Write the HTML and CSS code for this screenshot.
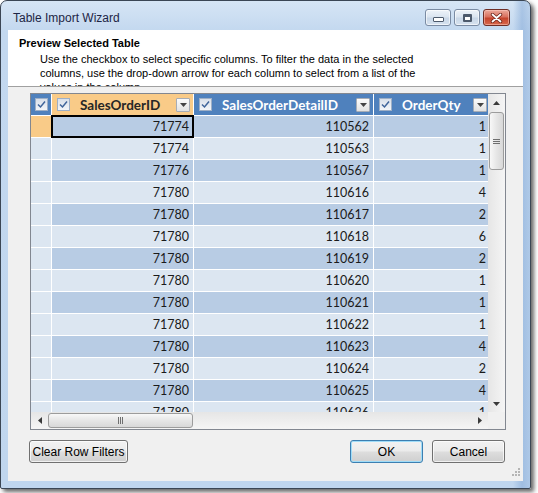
FILE: index.html
```html
<!DOCTYPE html>
<html>
<head>
<meta charset="utf-8">
<title>Table Import Wizard</title>
<link rel="stylesheet" href="styles.css">
</head>
<body>
<div class="window">
  <div class="titlebar">
    <span class="title">Table Import Wizard</span>
    <div class="caption">
      <span class="cbtn"><span class="min-ico"></span></span>
      <span class="cbtn"><span class="max-ico"></span></span>
      <span class="cbtn close"><svg width="13" height="10" viewBox="0 0 13 10"><path d="M2.5 1.5 L10.5 8.5 M10.5 1.5 L2.5 8.5" stroke="#6b2419" stroke-width="3.4" stroke-linecap="round"/><path d="M2.5 1.5 L10.5 8.5 M10.5 1.5 L2.5 8.5" stroke="#fff" stroke-width="1.8" stroke-linecap="round"/></svg></span>
    </div>
  </div>
  <div class="client">
    <div class="header">
      <div class="h-title">Preview Selected Table</div>
      <p class="h-desc">Use the checkbox to select specific columns. To filter the data in the selected<br>columns, use the drop-down arrow for each column to select from a list of the<br>values in the column.</p>
    </div>
    <div class="content">
      <div class="grid">
        <div class="cells">
          <div class="hc corner-hc"><span class="cb"><svg width="9" height="9" viewBox="0 0 9 9"><path d="M1 4.5 L3.5 7 L8 1.5" fill="none" stroke="#3f649a" stroke-width="1.5"/></svg></span></div>
          <div class="hc sel"><span class="cb"><svg width="9" height="9" viewBox="0 0 9 9"><path d="M1 4.5 L3.5 7 L8 1.5" fill="none" stroke="#3f649a" stroke-width="1.5"/></svg></span><span class="name">SalesOrderID</span><span class="dd"><svg width="7" height="4" viewBox="0 0 7 4"><path d="M0 0 H7 L3.5 4 Z" fill="#444"/></svg></span></div>
          <div class="hc"><span class="cb"><svg width="9" height="9" viewBox="0 0 9 9"><path d="M1 4.5 L3.5 7 L8 1.5" fill="none" stroke="#3f649a" stroke-width="1.5"/></svg></span><span class="name">SalesOrderDetailID</span><span class="dd"><svg width="7" height="4" viewBox="0 0 7 4"><path d="M0 0 H7 L3.5 4 Z" fill="#444"/></svg></span></div>
          <div class="hc"><span class="cb"><svg width="9" height="9" viewBox="0 0 9 9"><path d="M1 4.5 L3.5 7 L8 1.5" fill="none" stroke="#3f649a" stroke-width="1.5"/></svg></span><span class="name">OrderQty</span><span class="dd"><svg width="7" height="4" viewBox="0 0 7 4"><path d="M0 0 H7 L3.5 4 Z" fill="#444"/></svg></span></div>

          <div class="rh sel"></div><div class="c cur">71774</div><div class="c">110562</div><div class="c">1</div>
          <div class="rh"></div><div class="c l">71774</div><div class="c l">110563</div><div class="c l">1</div>
          <div class="rh"></div><div class="c">71776</div><div class="c">110567</div><div class="c">1</div>
          <div class="rh"></div><div class="c l">71780</div><div class="c l">110616</div><div class="c l">4</div>
          <div class="rh"></div><div class="c">71780</div><div class="c">110617</div><div class="c">2</div>
          <div class="rh"></div><div class="c l">71780</div><div class="c l">110618</div><div class="c l">6</div>
          <div class="rh"></div><div class="c">71780</div><div class="c">110619</div><div class="c">2</div>
          <div class="rh"></div><div class="c l">71780</div><div class="c l">110620</div><div class="c l">1</div>
          <div class="rh"></div><div class="c">71780</div><div class="c">110621</div><div class="c">1</div>
          <div class="rh"></div><div class="c l">71780</div><div class="c l">110622</div><div class="c l">1</div>
          <div class="rh"></div><div class="c">71780</div><div class="c">110623</div><div class="c">4</div>
          <div class="rh"></div><div class="c l">71780</div><div class="c l">110624</div><div class="c l">2</div>
          <div class="rh"></div><div class="c">71780</div><div class="c">110625</div><div class="c">4</div>
          <div class="rh"></div><div class="c l">71780</div><div class="c l">110626</div><div class="c l">1</div>
        </div>
        <div class="vscroll">
          <span class="arrow"><svg width="7" height="4" viewBox="0 0 7 4"><path d="M0 4 H7 L3.5 0 Z" fill="#3a3a3a"/></svg></span>
          <span class="vthumb"><svg width="7" height="7" viewBox="0 0 7 7"><path d="M0 1.5 H7 M0 3.5 H7 M0 5.5 H7" stroke="#6f6f6f" stroke-width="1"/></svg></span>
          <span class="fill"></span>
          <span class="arrow"><svg width="7" height="4" viewBox="0 0 7 4"><path d="M0 0 H7 L3.5 4 Z" fill="#3a3a3a"/></svg></span>
        </div>
        <div class="hscroll">
          <span class="arrow"><svg width="4" height="7" viewBox="0 0 4 7"><path d="M4 0 V7 L0 3.5 Z" fill="#3a3a3a"/></svg></span>
          <span class="hthumb"><svg width="7" height="7" viewBox="0 0 7 7"><path d="M1.5 0 V7 M3.5 0 V7 M5.5 0 V7" stroke="#6f6f6f" stroke-width="1"/></svg></span>
          <span class="fill"></span>
          <span class="arrow"><svg width="4" height="7" viewBox="0 0 4 7"><path d="M0 0 V7 L4 3.5 Z" fill="#3a3a3a"/></svg></span>
        </div>
        <div class="corner"></div>
      </div>
    </div>
    <div class="footer">
      <button class="btn wide">Clear Row Filters</button>
      <span class="spacer"></span>
      <button class="btn ok">OK</button>
      <button class="btn">Cancel</button>
    </div>
    <svg class="grip" width="11" height="11" viewBox="0 0 11 11"><g fill="#b5b5b5"><rect x="8" y="0" width="2" height="2"/><rect x="5" y="3" width="2" height="2"/><rect x="8" y="3" width="2" height="2"/><rect x="2" y="6" width="2" height="2"/><rect x="5" y="6" width="2" height="2"/><rect x="8" y="6" width="2" height="2"/></g></svg>
  </div>
</div>
</body>
</html>
```

FILE: styles.css
```css
html, body {
  margin: 0;
  padding: 0;
  background: #ffffff;
}

body {
  width: 538px;
  height: 493px;
  overflow: hidden;
  font-family: "Liberation Sans", Arial, sans-serif;
}

.window {
  width: 531px;
  height: 489px;
  box-sizing: border-box;
  border: 1px solid #3b4654;
  border-radius: 7px 7px 2px 2px;
  padding: 0 7px 7px 7px;
  display: flex;
  flex-direction: column;
  background:
    linear-gradient(90deg, rgba(255,255,255,0) 0, rgba(255,255,255,0) 512px, rgba(120,160,210,0.45) 521px, rgba(120,160,210,0.25) 529px),
    linear-gradient(180deg, #d6e5f5 0, #c3d8ef 30px, #c0d6ee 100%);
  box-shadow: 3px 3px 4px rgba(0, 0, 0, 0.6);
}

.titlebar {
  height: 29px;
  flex: none;
  display: flex;
  align-items: flex-start;
}

.title {
  margin: 10px 0 0 5px;
  font-size: 12px;
  line-height: 14px;
  color: #1d2545;
}

.caption {
  margin: 8px 13px 0 auto;
  display: flex;
  gap: 3px;
}

.cbtn {
  box-sizing: border-box;
  width: 26px;
  height: 17px;
  border: 1px solid #7a8ba3;
  border-radius: 3px;
  background: linear-gradient(180deg, #eef3f9 0, #dbe5f0 45%, #c9d7e7 55%, #d7e3f0 100%);
  display: flex;
  align-items: center;
  justify-content: center;
  box-shadow: inset 0 0 0 1px rgba(255,255,255,0.6);
}

.cbtn.close {
  width: 27px;
  border-color: #6e2d25;
  background: linear-gradient(180deg, #eba99b 0, #d9715f 45%, #c4442d 55%, #d8684c 100%);
  box-shadow: inset 0 0 0 1px rgba(255,210,200,0.5);
}

.min-ico {
  width: 9px;
  height: 3px;
  border: 1px solid #4d5a6c;
  background: #fff;
  border-radius: 1px;
  margin-top: 3px;
}

.max-ico {
  width: 7px;
  height: 5px;
  border: 1px solid #4d5a6c;
  border-top-width: 2px;
  background: #fff;
  box-shadow: inset 0 0 0 1px #4d5a6c;
  border-radius: 1px;
}

.client {
  flex: 1;
  min-height: 0;
  position: relative;
  background: #f0f0f0;
  display: flex;
  flex-direction: column;
}

.header {
  box-sizing: border-box;
  height: 57px;
  flex: none;
  background: #ffffff;
  border-bottom: 1px solid #a0a0a0;
  padding: 7px 0 0 11px;
  overflow: hidden;
}

.h-title {
  font-weight: bold;
  font-size: 11px;
  line-height: 13px;
  color: #000;
}

.h-desc {
  margin: 2px 0 0 21px;
  font-size: 11px;
  line-height: 14px;
  color: #000;
  white-space: nowrap;
}

.content {
  flex: none;
  padding: 6px 0 0 22px;
}

.grid {
  width: 474px;
  height: 335px;
  border: 1px solid #828790;
  background: #ffffff;
  display: grid;
  grid-template-columns: 457px 17px;
  grid-template-rows: 318px 17px;
}

.cells {
  overflow: hidden;
  display: grid;
  grid-template-columns: 20px 141px 179px 116px;
  grid-auto-rows: 21px;
  gap: 1px;
  align-content: start;
  background: #ffffff;
}

.hc {
  background: #4f81bd;
  display: flex;
  align-items: center;
  padding: 0 3px 0 5px;
  color: #ffffff;
  font-family: Lato, "Liberation Sans", sans-serif;
  font-weight: bold;
  font-size: 13.5px;
  white-space: nowrap;
  overflow: hidden;
}

.hc.sel {
  background: #f9cb88;
  color: #262626;
}

.corner-hc {
  padding: 0;
  justify-content: center;
}

.cb {
  box-sizing: border-box;
  width: 13px;
  height: 13px;
  flex: none;
  border: 1px solid #9eafc6;
  background: linear-gradient(180deg, #d9e0ea 0, #f3f5f8 100%);
  display: flex;
  align-items: center;
  justify-content: center;
}

.name {
  margin-left: 10px;
}

.dd {
  box-sizing: border-box;
  margin-left: auto;
  width: 14px;
  height: 14px;
  flex: none;
  border: 1px solid #a7adb6;
  border-radius: 1px;
  background: linear-gradient(180deg, #fbfbfb 0, #e2e2e2 100%);
  display: flex;
  align-items: center;
  justify-content: center;
}

.rh {
  background: #dce6f1;
}

.rh.sel {
  background: #f9cb88;
}

.c {
  background: #b8cce4;
  text-align: right;
  padding-right: 4px;
  font-family: Lato, "Liberation Sans", sans-serif;
  font-size: 12.5px;
  line-height: 21px;
  color: #1a1a1a;
}

.c.l {
  background: #dce6f1;
}

.c.cur {
  position: relative;
  z-index: 1;
  box-shadow: 0 0 0 1px #000, inset 0 0 0 1px #000;
}

.vscroll {
  background: linear-gradient(90deg, #e6e6e6 0, #f5f5f5 100%);
  display: flex;
  flex-direction: column;
  align-items: center;
}

.hscroll {
  background: linear-gradient(180deg, #e6e6e6 0, #f5f5f5 100%);
  display: flex;
  align-items: center;
}

.arrow {
  width: 17px;
  height: 17px;
  flex: none;
  display: flex;
  align-items: center;
  justify-content: center;
}

.fill {
  flex: 1;
}

.vthumb {
  width: 13px;
  height: 56px;
  margin-top: 1px;
  border: 1px solid #9c9c9c;
  border-radius: 3px;
  background: linear-gradient(90deg, #f8f8f8 0, #e6e6e6 50%, #d8d8d8 100%);
  display: flex;
  align-items: center;
  justify-content: center;
}

.hthumb {
  width: 143px;
  height: 13px;
  border: 1px solid #9c9c9c;
  border-radius: 3px;
  background: linear-gradient(180deg, #f8f8f8 0, #e6e6e6 50%, #d8d8d8 100%);
  display: flex;
  align-items: center;
  justify-content: center;
}

.corner {
  background: #f0f0f0;
}

.footer {
  flex: none;
  display: flex;
  gap: 9px;
  padding: 10px 18px 0 21px;
}

.spacer {
  flex: 1;
}

.btn {
  box-sizing: border-box;
  width: 73px;
  height: 23px;
  padding: 0;
  border: 1px solid #707070;
  border-radius: 3px;
  background: linear-gradient(180deg, #f2f2f2 0, #ebebeb 48%, #dddddd 52%, #cfcfcf 100%);
  box-shadow: inset 0 0 0 1px rgba(255,255,255,0.7);
  font-family: "Liberation Sans", Arial, sans-serif;
  font-size: 12px;
  color: #000;
}

.btn.wide {
  width: 99px;
}

.btn.ok {
  border-color: #3c7fb1;
  box-shadow: inset 0 0 0 1px #9fdcf8;
}

.grip {
  position: absolute;
  right: 2px;
  bottom: 2px;
}
```
